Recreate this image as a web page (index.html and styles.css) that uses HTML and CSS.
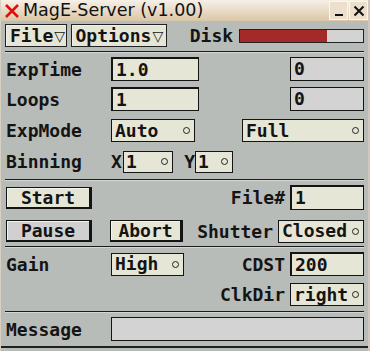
FILE: index.html
```html
<!DOCTYPE html>
<html lang="en">
<head>
    <meta charset="UTF-8">
    <title>MagE-Server (v1.00)</title>
    <link rel="stylesheet" href="styles.css">
</head>
<body>
    <div class="window">
        <!-- Title bar -->
        <div class="titlebar">
            <svg class="title-icon" width="14" height="14" viewBox="0 0 14 14">
                <path d="M1 1 L13 13 M13 1 L1 13" stroke="#e01010" stroke-width="2.6" fill="none"/>
            </svg>
            <span class="title">MagE-Server (v1.00)</span>
            <div class="wm-buttons">
                <span class="wm-btn">
                    <svg width="12" height="12" viewBox="0 0 12 12"><rect x="2" y="9" width="8" height="2" fill="#111"/></svg>
                </span>
                <span class="wm-btn">
                    <svg width="12" height="12" viewBox="0 0 12 12"><path d="M1.5 1.5 L10.5 10.5 M10.5 1.5 L1.5 10.5" stroke="#111" stroke-width="2" fill="none"/></svg>
                </span>
            </div>
        </div>

        <div class="panel">
            <!-- Menu bar -->
            <div class="row menubar">
                <span class="menu file-menu">File<span class="arrow">▽</span></span>
                <span class="menu options-menu">Options <span class="arrow">▽</span></span>
                <span class="disk-label">Disk</span>
                <div class="disk-bar"><div class="disk-fill" style="width: 71%"></div></div>
            </div>
            <div class="sep"></div>

            <div class="row r-exptime">
                <span class="label">ExpTime</span>
                <span class="entry w-exp">1.0</span>
                <span class="entry grey w-right push">0</span>
            </div>
            <div class="row r-loops">
                <span class="label">Loops</span>
                <span class="entry w-exp">1</span>
                <span class="entry grey w-right push">0</span>
            </div>
            <div class="row r-mode">
                <span class="label">ExpMode</span>
                <span class="option w-auto">Auto<i class="dot"></i></span>
                <span class="option w-full push">Full<i class="dot"></i></span>
            </div>
            <div class="row r-bin">
                <span class="label">Binning</span>
                <span class="axis">X</span>
                <span class="option small w-binx">1<i class="dot"></i></span>
                <span class="axis axis-y">Y</span>
                <span class="option small w-biny">1<i class="dot"></i></span>
            </div>
            <div class="sep sep2"></div>

            <div class="row r-start">
                <span class="button beige w-btn">Start</span>
                <span class="rlabel push">File#</span>
                <span class="entry w-right">1</span>
            </div>
            <div class="row r-pause">
                <span class="button grey w-btn">Pause</span>
                <span class="button beige w-abort">Abort</span>
                <span class="rlabel push">Shutter</span>
                <span class="option w-closed">Closed<i class="dot"></i></span>
            </div>
            <div class="sep sep3"></div>

            <div class="row r-gain">
                <span class="label">Gain</span>
                <span class="option w-high">High<i class="dot"></i></span>
                <span class="rlabel push">CDST</span>
                <span class="entry w-right">200</span>
            </div>
            <div class="row r-clk">
                <span class="rlabel push">ClkDir</span>
                <span class="option w-right">right<i class="dot"></i></span>
            </div>
            <div class="sep sep4"></div>

            <div class="row r-msg">
                <span class="label">Message</span>
                <span class="entry grey w-msg"></span>
            </div>
        </div>
    </div>
</body>
</html>
```

FILE: styles.css
```css
/* Global */
:root {
    --bg: #b8bcb8;
    --beige: #e6e6d6;
    --grey-field: #d3d3d3;
    --ink: #141414;
    --mono: 'DejaVu Sans Mono', 'Liberation Mono', monospace;
}

html, body {
    margin: 0;
    padding: 0;
    background: var(--bg);
}

.window {
    width: 370px;
    height: 351px;
    box-sizing: border-box;
    background: var(--bg);
    border-left: 1px solid #d8d0c0;
    border-right: 2px solid #cfc8bb;
    overflow: hidden;
}

/* Title bar */
.titlebar {
    height: 21px;
    display: flex;
    align-items: center;
    background: linear-gradient(#f6f0e8, #dcc6a6);
    font-family: 'DejaVu Sans', sans-serif;
    font-size: 17.5px;
    color: #111;
}

.title-icon {
    margin-left: 4px;
    margin-right: 4px;
}

.title {
    line-height: 21px;
}

.wm-buttons {
    margin-left: auto;
    display: flex;
    gap: 1px;
}

.wm-btn {
    width: 17px;
    height: 17px;
    border: 1px solid #fbf6ee;
    display: flex;
    align-items: center;
    justify-content: center;
    background: #ece0cc;
}

/* Panel */
.panel {
    padding: 3px 4px 0 4px;
    font-family: var(--mono);
    font-weight: bold;
    font-size: 18px;
    color: var(--ink);
    height: 327px;
    box-sizing: border-box;
    border-bottom: 2px solid #202020;
}

.row {
    display: flex;
    align-items: center;
}

.push {
    margin-left: auto;
}

.sep {
    border-top: 1px solid #1c1c1c;
    border-bottom: 1px solid #d4d6d4;
    margin: 4px 0 0 0;
}

/* Menu bar */
.menubar {
    height: 23px;
}

.menu {
    height: 23px;
    box-sizing: border-box;
    border: 1px solid #222;
    box-shadow: inset 1px 1px 0 #f0f0e8;
    background: var(--beige);
    display: flex;
    align-items: center;
    padding-left: 4px;
}

.file-menu {
    width: 62px;
}

.options-menu {
    width: 97px;
    margin-left: 4px;
}

.arrow {
    font-family: 'DejaVu Sans', sans-serif;
    font-size: 14px;
    font-weight: normal;
    margin-left: 1px;
}

.disk-label {
    margin-left: 23px;
}

.disk-bar {
    width: 126px;
    height: 14px;
    box-sizing: border-box;
    margin-left: 6px;
    border: 1px solid #222;
    background: var(--grey-field);
}

.disk-fill {
    height: 100%;
    background: #a42a2a;
}

/* Fields */
.label {
    width: 105px;
    flex: none;
    padding-left: 1px;
}

.rlabel {
    margin-right: 5px;
}

.entry, .option {
    box-sizing: border-box;
    height: 24px;
    border: 2px solid var(--ink);
    border-right-width: 1px;
    border-bottom-width: 1px;
    background: var(--beige);
    display: flex;
    align-items: center;
    padding-left: 3px;
    line-height: 1;
}

.entry.grey {
    background: var(--grey-field);
    border-width: 1px;
}

.option {
    height: 23px;
    border-width: 1px;
}

.dot {
    margin-left: auto;
    margin-right: 4px;
    width: 5px;
    height: 5px;
    border: 1px solid #222;
    border-radius: 50%;
}

.option.small {
    height: 22px;
    padding-left: 2px;
}

.button {
    box-sizing: border-box;
    height: 22px;
    border: 1px solid var(--ink);
    border-right-width: 3px;
    border-bottom-width: 2px;
    box-shadow: inset 1px 1px 0 #f4f4ec;
    display: flex;
    align-items: center;
    justify-content: center;
}

.button.beige {
    background: var(--beige);
}

.button.grey {
    background: #d0d0d0;
}

/* Widths */
.w-exp { width: 88px; }
.w-right { width: 74px; }
.w-auto { width: 84px; }
.w-full { width: 122px; }
.w-binx { width: 50px; }
.w-biny { width: 38px; }
.w-btn { width: 86px; margin-left: 1px; }
.w-abort { width: 73px; margin-left: 18px; }
.w-closed { width: 86px; }
.w-high { width: 73px; }
.w-msg { width: 254px; }

.axis {
    width: 12px;
}

.axis-y {
    margin-left: 4px;
    width: 18px;
    text-align: right;
}

/* Row spacing */
.r-exptime { margin-top: 4px; height: 24px; }
.r-loops { margin-top: 6px; height: 24px; }
.r-mode { margin-top: 8px; height: 23px; }
.r-bin { margin-top: 8px; height: 23px; }
.sep2 { margin-top: 6px; }
.r-start { margin-top: 4px; height: 25px; }
.r-start .entry { height: 25px; }
.r-pause { margin-top: 9px; height: 24px; }
.sep3 { margin-top: 3px; }
.r-gain { margin-top: 4px; height: 24px; }
.r-clk { margin-top: 7px; height: 23px; }
.sep4 { margin-top: 5px; }
.r-msg { margin-top: 4px; height: 24px; }
```
